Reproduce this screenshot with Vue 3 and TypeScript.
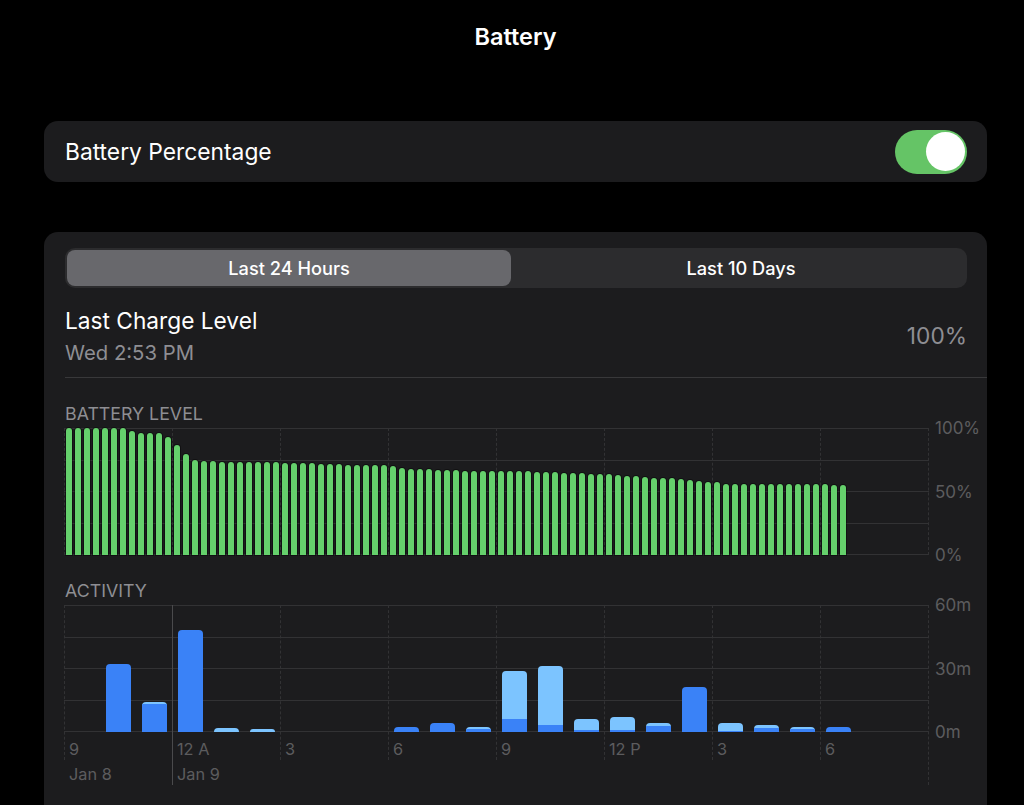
<template>
  <div class="page">
    <h1 class="title">Battery</h1>

    <div class="card toggle-card">
      <span class="row-label">Battery Percentage</span>
      <div class="switch"><div class="knob"></div></div>
    </div>

    <div class="card usage-card">
      <div class="segments">
        <div class="segment active">Last 24 Hours</div>
        <div class="segment">Last 10 Days</div>
      </div>

      <div class="charge-row">
        <div>
          <div class="charge-label">Last Charge Level</div>
          <div class="charge-time">Wed 2:53 PM</div>
        </div>
        <div class="charge-value">100%</div>
      </div>

      <h3 class="chart-title">BATTERY LEVEL</h3>
      <div class="chart-row">
        <div class="plot">
          <div class="h-lines"><i v-for="n in 5" :key="n"></i></div>
          <div class="v-lines"><i v-for="n in 9" :key="n"></i></div>
          <div class="level-bars">
            <div v-for="(h, i) in levels" :key="i" class="level-bar" :style="{ height: h + 'px' }"></div>
          </div>
        </div>
        <div class="axis"><span>100%</span><span>50%</span><span>0%</span></div>
      </div>

      <h3 class="chart-title second">ACTIVITY</h3>
      <div class="chart-row">
        <div class="plot">
          <div class="h-lines"><i v-for="n in 5" :key="n"></i></div>
          <div class="v-lines tall">
            <i v-for="n in 9" :key="n" :class="{ solid: n === 2, long: n === 2 || n === 9 }"></i>
          </div>
          <div class="activity-bars">
            <div v-for="(b, i) in activity" :key="i" class="activity-bar" :style="{ height: b.total + 'px' }">
              <div class="screen-on" :style="{ height: b.dark + 'px' }"></div>
            </div>
          </div>
        </div>
        <div class="axis"><span>60m</span><span>30m</span><span>0m</span></div>
      </div>
      <div class="ticks">
        <span v-for="t in ticks" :key="t">{{ t }}</span>
      </div>
      <div class="ticks dates">
        <span>Jan 8</span><span>Jan 9</span>
      </div>
    </div>
  </div>
</template>

<script setup lang="ts">
interface ActivityBar {
  total: number
  dark: number
}

const chartBottom = 555

// tops of the bars as read from the chart
const levelTops = [
  428, 428, 428, 428, 428, 428, 428, 431, 433, 433, 433, 437, 445, 454, 460, 461, 461, 462, 462, 462, 462, 462, 462,
  462, 463, 463, 463, 463, 464, 464, 464, 465, 465, 465, 465, 465, 466, 468, 469, 469, 469, 470, 470, 470, 471, 471,
  471, 471, 471, 471, 471, 471, 472, 472, 472, 473, 473, 473, 474, 474, 474, 475, 476, 476, 477, 478, 478, 478, 479,
  480, 481, 482, 482, 484, 484, 484, 484, 484, 484, 484, 484, 484, 484, 484, 484, 485, 485
]
const levels = levelTops.map((top) => chartBottom - top)

const activity: ActivityBar[] = [
  { total: 68, dark: 68 },
  { total: 30, dark: 28 },
  { total: 102, dark: 102 },
  { total: 4, dark: 0 },
  { total: 3, dark: 0 },
  { total: 0, dark: 0 },
  { total: 0, dark: 0 },
  { total: 0, dark: 0 },
  { total: 5, dark: 5 },
  { total: 9, dark: 9 },
  { total: 5, dark: 3 },
  { total: 61, dark: 13 },
  { total: 66, dark: 7 },
  { total: 13, dark: 2 },
  { total: 15, dark: 2 },
  { total: 9, dark: 6 },
  { total: 45, dark: 45 },
  { total: 9, dark: 1 },
  { total: 7, dark: 4 },
  { total: 5, dark: 3 },
  { total: 5, dark: 5 }
]

const ticks = ['9', '12 A', '3', '6', '9', '12 P', '3', '6']
</script>

<style>
html,
body {
  margin: 0;
  background: #000;
  overflow: hidden;
}
</style>

<style scoped>
.page {
  height: 805px;
  overflow: hidden;
  padding: 0 37px 0 44px;
  background: #000;
  color: #fff;
  font-family: Inter, "Liberation Sans", sans-serif;
}

.title {
  margin: 0;
  height: 121px;
  padding-top: 23px;
  box-sizing: border-box;
  font-size: 23.5px;
  line-height: 28px;
  font-weight: 600;
  text-align: center;
}

.card {
  background: #1c1c1e;
  border-radius: 14px;
}

.toggle-card {
  height: 61px;
  display: flex;
  align-items: center;
  justify-content: space-between;
  padding: 0 20px 0 21px;
  margin-bottom: 50px;
}

.row-label {
  font-size: 22.8px;
  line-height: 28px;
}

.switch {
  width: 72px;
  height: 44px;
  padding: 2px 2px 3px 0;
  box-sizing: border-box;
  border-radius: 22px;
  background: #65c466;
  display: flex;
  justify-content: flex-end;
}

.knob {
  width: 39px;
  height: 39px;
  border-radius: 50%;
  background: #fff;
}

.usage-card {
  padding: 16px 0 40px 21px;
}

.segments {
  width: 902px;
  height: 40px;
  padding: 2px;
  box-sizing: border-box;
  display: flex;
  background: #2c2c2e;
  border-radius: 10px;
}

.segment {
  flex: 1;
  display: flex;
  align-items: center;
  justify-content: center;
  padding-left: 6px;
  font-size: 18.2px;
  font-weight: 500;
  border-radius: 8px;
}

.segment.active {
  flex: 0 0 444px;
  padding-left: 0;
  background: #68686c;
}

.charge-row {
  height: 90px;
  box-sizing: border-box;
  padding: 6px 20px 0 0;
  display: flex;
  align-items: center;
  justify-content: space-between;
  border-bottom: 1px solid #38383a;
}

.charge-label {
  font-size: 22.7px;
  line-height: 28px;
}

.charge-time {
  margin-top: 6px;
  font-size: 20.3px;
  line-height: 24px;
  color: #8e8e93;
}

.charge-value {
  font-size: 22.7px;
  color: #8e8e93;
}

.chart-title {
  margin: 26px 0 4px;
  font-size: 17.8px;
  line-height: 20px;
  font-weight: 400;
  color: #8e8e93;
}

.chart-title.second {
  margin-top: 26px;
}

.chart-row {
  display: flex;
  margin-left: -1px;
}

.plot {
  position: relative;
  width: 865px;
  height: 127px;
}

.h-lines,
.v-lines {
  position: absolute;
  inset: 0;
  display: flex;
  justify-content: space-between;
}

.h-lines {
  flex-direction: column;
}

.h-lines i {
  display: block;
  height: 1px;
  background: #323234;
}

.v-lines i {
  display: block;
  width: 0;
  height: 100%;
  border-left: 1px dashed #323234;
}

.v-lines.tall i {
  height: 155px;
}

.v-lines.tall i.long {
  height: 180px;
}

.v-lines.tall i.solid {
  border-left: 1px solid #4a4a4c;
}

.level-bars {
  position: absolute;
  inset: 0;
  padding-left: 2px;
  display: flex;
  align-items: flex-end;
  gap: 3px;
}

.level-bar {
  flex: 0 0 6px;
  border-radius: 3px 3px 0 0;
  background: #65d06c;
  box-shadow: 0 0 0 1px rgba(0, 0, 0, 0.4);
}

.activity-bars {
  position: absolute;
  inset: 0;
  padding-left: 42px;
  display: flex;
  align-items: flex-end;
  gap: 11px;
}

.activity-bar {
  flex: 0 0 25px;
  display: flex;
  align-items: flex-end;
  overflow: hidden;
  border-radius: 4px 4px 0 0;
  background: #7cc4ff;
}

.screen-on {
  width: 100%;
  background: #3a82f7;
}

.axis {
  height: 127px;
  margin: 0 0 0 6px;
  display: flex;
  flex-direction: column;
  justify-content: space-between;
  font-size: 17px;
  line-height: 16px;
  color: #5c5c5e;
}

.axis span {
  margin: -8px 0;
}

.ticks {
  display: grid;
  grid-template-columns: repeat(8, 108px);
  margin: 8px 0 0 -1px;
  padding-left: 5px;
  position: relative;
  font-size: 16.3px;
  line-height: 18px;
  color: #5c5c5e;
}

.ticks.dates {
  margin-top: 7px;
}
</style>
